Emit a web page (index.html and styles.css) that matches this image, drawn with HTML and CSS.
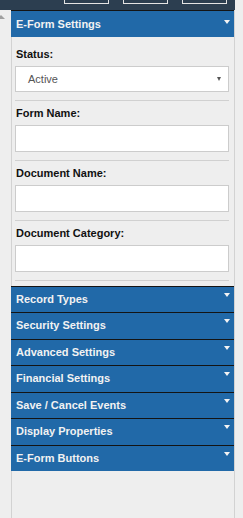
FILE: index.html
```html
<!DOCTYPE html>
<html lang="en">
<head>
    <meta charset="UTF-8">
    <title>E-Form Settings</title>
    <link rel="stylesheet" href="styles.css">
</head>
<body>
    <div class="topbar">
        <div class="top-btn"></div>
        <div class="top-btn"></div>
        <div class="top-btn"></div>
    </div>
    <div class="layout">
        <div class="gutter">
            <span class="scroll-up"></span>
        </div>
        <div class="panel">
            <div class="section-head open">
                <span>E-Form Settings</span>
                <span class="caret"></span>
            </div>
            <div class="form-body">
                <div class="field first">
                    <label>Status:</label>
                    <div class="select">
                        <span>Active</span>
                        <span class="select-arrow"></span>
                    </div>
                </div>
                <div class="field">
                    <label>Form Name:</label>
                    <input type="text" class="text-input">
                </div>
                <div class="field">
                    <label>Document Name:</label>
                    <input type="text" class="text-input">
                </div>
                <div class="field">
                    <label>Document Category:</label>
                    <input type="text" class="text-input">
                </div>
            </div>
            <div class="section-head"><span>Record Types</span><span class="caret"></span></div>
            <div class="section-head"><span>Security Settings</span><span class="caret"></span></div>
            <div class="section-head"><span>Advanced Settings</span><span class="caret"></span></div>
            <div class="section-head"><span>Financial Settings</span><span class="caret"></span></div>
            <div class="section-head"><span>Save / Cancel Events</span><span class="caret"></span></div>
            <div class="section-head"><span>Display Properties</span><span class="caret"></span></div>
            <div class="section-head"><span>E-Form Buttons</span><span class="caret"></span></div>
            <div class="filler"></div>
        </div>
    </div>
</body>
</html>
```
FILE: styles.css
```css
body {
    margin: 0;
    background: #eeeeee;
    font-family: "Liberation Sans", Arial, sans-serif;
    font-size: 11px;
    color: #111;
}

.topbar {
    width: 235px;
    height: 10px;
    background: #2c3e50;
    display: flex;
    align-items: flex-start;
    gap: 14px;
    padding-left: 64px;
    box-sizing: border-box;
}

.top-btn {
    width: 45px;
    height: 4px;
    border: 1px solid #e4e4e4;
    border-top: none;
    box-sizing: border-box;
}

.layout {
    display: flex;
    min-height: calc(100vh - 10px);
}

.gutter {
    width: 11px;
    flex-shrink: 0;
}

.scroll-up {
    display: block;
    width: 0;
    height: 0;
    margin: 5px 0 0 -3px;
    border-left: 4px solid transparent;
    border-right: 4px solid transparent;
    border-bottom: 4px solid #a0a0a0;
}

.panel {
    width: 224px;
    box-sizing: border-box;
    border-left: 1px solid #d2d2d2;
    border-right: 1px solid #d2d2d2;
    display: flex;
    flex-direction: column;
}

.section-head {
    margin-left: -1px;
    height: 25.43px;
    border-top: 1px solid #141414;
    background: #2169a8;
    color: #f2f2f2;
    font-weight: bold;
    font-size: 11px;
    line-height: 25.43px;
    padding: 0 4px 0 5px;
    display: flex;
    justify-content: space-between;
    align-items: flex-start;
}

.section-head.open {
    height: 26px;
    line-height: 26px;
}

.caret {
    width: 0;
    height: 0;
    margin-top: 6px;
    border-left: 3.5px solid transparent;
    border-right: 3.5px solid transparent;
    border-top: 4px solid #f4f4f4;
}

.section-head.open .caret {
    margin-top: 9px;
}

.form-body {
    padding: 0 5px 5px 3px;
}

.field {
    padding: 5px 0 8px;
    border-bottom: 1px solid #d0d0d0;
}

.field.first {
    padding-top: 10px;
}

.field label {
    display: block;
    font-weight: bold;
    line-height: 14px;
    margin-bottom: 5px;
    padding-left: 1px;
}

.select {
    height: 26px;
    box-sizing: border-box;
    border: 1px solid #cccccc;
    background: #fff;
    display: flex;
    align-items: center;
    justify-content: space-between;
    padding: 0 7px 0 12px;
    color: #555;
    font-size: 11px;
}

.select-arrow {
    width: 0;
    height: 0;
    border-left: 2.5px solid transparent;
    border-right: 2.5px solid transparent;
    border-top: 4px solid #555;
}

.text-input {
    display: block;
    width: 100%;
    height: 27px;
    box-sizing: border-box;
    margin: 0;
    border: 1px solid #cccccc;
    background: #fff;
    font-family: inherit;
}

.filler {
    flex: 1;
}
```
